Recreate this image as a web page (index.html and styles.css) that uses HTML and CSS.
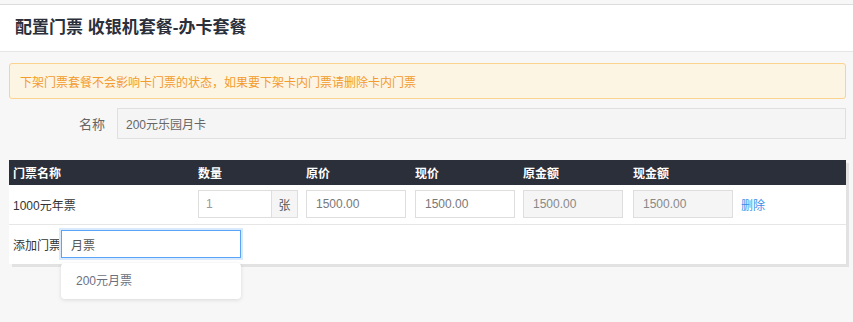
FILE: index.html
```html
<!DOCTYPE html>
<html lang="zh-CN">
<head>
    <meta charset="UTF-8">
    <title>配置门票</title>
    <link rel="stylesheet" href="styles.css">
</head>
<body>
    <div class="header">
        <h1>配置门票 收银机套餐-办卡套餐</h1>
    </div>

    <div class="content">
        <div class="alert">下架门票套餐不会影响卡门票的状态，如果要下架卡内门票请删除卡内门票</div>

        <div class="form-row">
            <label class="form-label">名称</label>
            <div class="form-input readonly">200元乐园月卡</div>
        </div>

        <div class="ticket-table">
            <table>
                <colgroup>
                    <col style="width:185px">
                    <col style="width:108px">
                    <col style="width:109px">
                    <col style="width:108px">
                    <col style="width:110px">
                    <col style="width:108px">
                    <col>
                </colgroup>
                <thead>
                    <tr>
                        <th>门票名称</th>
                        <th>数量</th>
                        <th>原价</th>
                        <th>现价</th>
                        <th>原金额</th>
                        <th>现金额</th>
                        <th></th>
                    </tr>
                </thead>
                <tbody>
                    <tr>
                        <td>1000元年票</td>
                        <td>
                            <div class="input-group">
                                <span class="input qty">1</span>
                                <span class="addon">张</span>
                            </div>
                        </td>
                        <td><span class="input">1500.00</span></td>
                        <td><span class="input">1500.00</span></td>
                        <td><span class="input disabled">1500.00</span></td>
                        <td><span class="input disabled">1500.00</span></td>
                        <td><a class="link" href="#">删除</a></td>
                    </tr>
                </tbody>
            </table>
            <div class="add-row">
                <span class="add-label">添加门票</span>
                <div class="search">
                    <span class="input focused">月票</span>
                    <ul class="dropdown">
                        <li>200元月票</li>
                    </ul>
                </div>
            </div>
        </div>
    </div>
</body>
</html>
```

FILE: styles.css
```css
* {
    box-sizing: border-box;
}
body {
    margin: 0;
    font-family: "Liberation Sans", "Noto Sans CJK SC", sans-serif;
    font-size: 12px;
    color: #333;
    background-color: #f7f7f7;
    padding-top: 4px;
    height: 322px;
    overflow: hidden;
}
.header {
    background-color: #fff;
    border-top: 1px solid #dcdcdc;
    border-bottom: 1px solid #e5e5e5;
    height: 48px;
    padding-left: 15px;
    display: flex;
    align-items: center;
}
.header h1 {
    margin: 0;
    font-size: 17px;
    font-weight: bold;
    color: #2b303b;
    line-height: 20px;
}
.content {
    padding: 11px 7px 0 9px;
}
.alert {
    height: 36px;
    padding: 0 10px;
    display: flex;
    align-items: center;
    background-color: #fdf5e4;
    border: 1px solid #fcd28f;
    border-radius: 3px;
    color: #f39b2d;
    font-size: 12px;
}
.form-row {
    display: flex;
    align-items: center;
    margin-top: 9px;
}
.form-label {
    width: 108px;
    text-align: right;
    padding-right: 12px;
    font-size: 13px;
    color: #666;
}
.form-input {
    flex: 1;
    height: 31px;
    display: flex;
    align-items: center;
    padding: 0 8px;
    border: 1px solid #e0e0e0;
    background-color: #f5f5f5;
    color: #666;
}
.ticket-table {
    margin-top: 21px;
    background-color: #fff;
    box-shadow: 3px 3px 0 #e2e2e2;
}
table {
    width: 100%;
    border-collapse: collapse;
    table-layout: fixed;
}
th {
    background-color: #2b2f3a;
    color: #fff;
    font-weight: bold;
    text-align: left;
    height: 25px;
    padding: 0 4px;
}
td {
    height: 39px;
    padding: 0 4px;
    border-bottom: 1px solid #e6e6e6;
    color: #333;
}
.input {
    display: flex;
    align-items: center;
    width: 100px;
    height: 28px;
    padding: 0 9px;
    border: 1px solid #dedede;
    background-color: #fff;
    color: #777;
}
.input.disabled {
    background-color: #f5f5f5;
    color: #888;
}
.input-group {
    display: flex;
}
.input.qty {
    width: 74px;
    flex-shrink: 0;
    padding-left: 7px;
    color: #999;
}
.addon {
    width: 26px;
    flex-shrink: 0;
    height: 28px;
    display: flex;
    align-items: center;
    justify-content: center;
    border: 1px solid #dedede;
    border-left: none;
    background-color: #f5f5f5;
    color: #555;
}
.link {
    color: #3b8ee8;
    text-decoration: none;
}
.add-row {
    height: 39px;
    display: flex;
    align-items: center;
    padding-left: 4px;
}
.add-label {
    color: #333;
}
.search {
    position: relative;
}
.input.focused {
    width: 180px;
    border-color: #5aa4f7;
    box-shadow: 0 0 0 2px #d9eafd;
    color: #555;
}
.dropdown {
    position: absolute;
    top: 33px;
    left: 0;
    width: 180px;
    margin: 0;
    padding: 0;
    list-style: none;
    background-color: #fff;
    border-radius: 4px;
    box-shadow: 0 1px 4px rgba(0, 0, 0, 0.12);
}
.dropdown li {
    height: 36px;
    line-height: 36px;
    padding-left: 15px;
    color: #6b7080;
}
```
